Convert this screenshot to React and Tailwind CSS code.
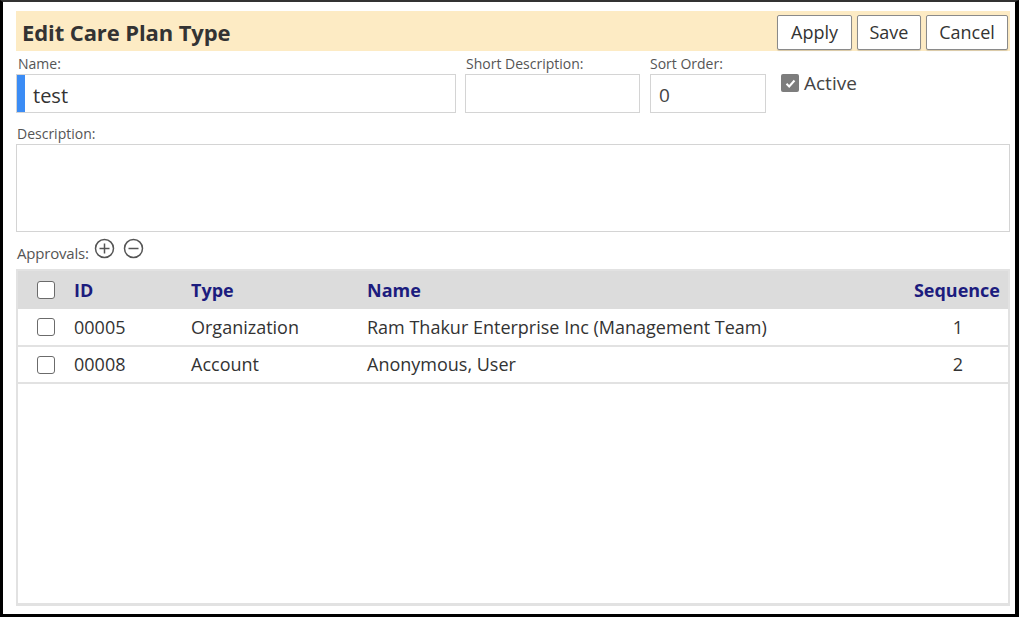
import React from "react";

const rows = [
  { id: "00005", type: "Organization", name: "Ram Thakur Enterprise Inc (Management Team)", seq: 1 },
  { id: "00008", type: "Account", name: "Anonymous, User", seq: 2 },
];

const buttons = [
  { label: "Apply", w: "w-[75px]" },
  { label: "Save", w: "w-[64px]" },
  { label: "Cancel", w: "w-[82px]" },
];

function Box() {
  return <span className="block h-[18px] w-[18px] rounded-[3px] border-[1.5px] border-[#6b6b6b] bg-white" />;
}

function CircleIcon({ plus }) {
  return (
    <svg width="21" height="21" viewBox="0 0 21 21" fill="none" stroke="#555" strokeWidth="1.5">
      <circle cx="10.5" cy="10.5" r="9" />
      <line x1="5.5" y1="10.5" x2="15.5" y2="10.5" />
      {plus && <line x1="10.5" y1="5.5" x2="10.5" y2="15.5" />}
    </svg>
  );
}

export default function App() {
  return (
    <div className="h-[617px] w-[1019px] overflow-hidden border-t-2 border-l-[3px] border-r-[4px] border-b-[3px] border-t-[#333] border-l-black border-r-black border-b-black bg-white pl-[13px] pr-[5px] pt-[9px] font-['Open_Sans',sans-serif] text-[#333]">
      {/* header band */}
      <div className="flex h-[40px] items-center justify-between bg-[#fdebc4] pl-[6px] pr-[2px] pt-[3px]">
        <h1 className="text-[22px] font-bold tracking-[-0.1px] text-[#333]">Edit Care Plan Type</h1>
        <div className="flex gap-[5px]">
          {buttons.map((b) => (
            <button
              key={b.label}
              className={`h-[35px] ${b.w} rounded-[2px] border border-[#8a8a8a] bg-white text-[18px] text-[#333] shadow-[0_1px_1px_rgba(0,0,0,0.15)]`}
            >
              {b.label}
            </button>
          ))}
        </div>
      </div>

      {/* fields */}
      <div className="mt-[3px] flex items-start">
        <div className="w-[440px]">
          <div className="pl-[2px] text-[14px] leading-[20px] text-[#555]">Name:</div>
          <div className="flex h-[39px] border border-[#d4d4d4]">
            <span className="w-[8px] bg-[#3b8cf5]" />
            <span className="flex items-center pl-[8px] pt-[4px] text-[20px] text-[#333]">test</span>
          </div>
        </div>
        <div className="ml-[9px] w-[175px]">
          <div className="pl-[1px] text-[14px] leading-[20px] text-[#555]">Short Description:</div>
          <div className="h-[39px] border border-[#d4d4d4]" />
        </div>
        <div className="ml-[10px] w-[116px]">
          <div className="text-[14px] leading-[20px] text-[#555]">Sort Order:</div>
          <div className="flex h-[39px] items-center border border-[#d4d4d4] pl-[8px] pt-[4px] text-[19px] text-[#444]">0</div>
        </div>
        <div className="ml-[15px] mt-[15px] flex items-center gap-[5px]">
          <span className="flex h-[18px] w-[18px] items-center justify-center rounded-[2px] bg-[#7d7d7d]">
            <svg width="13" height="13" viewBox="0 0 13 13" fill="none" stroke="white" strokeWidth="2">
              <path d="M2.5 6.8 L5.2 9.5 L10.5 3.5" />
            </svg>
          </span>
          <span className="text-[19px] text-[#444]">Active</span>
        </div>
      </div>

      {/* description */}
      <div className="mt-[11px]">
        <div className="pl-[1px] text-[14px] leading-[20px] text-[#555]">Description:</div>
        <div className="h-[88px] border border-[#d4d4d4]" />
      </div>

      {/* approvals */}
      <div className="mt-[6px] flex items-end gap-[5px]">
        <span className="pl-[1px] text-[15px] leading-[16px] tracking-[-0.2px] text-[#555]">Approvals:</span>
        <div className="mb-[2px] flex gap-[8px]">
          <CircleIcon plus />
          <CircleIcon />
        </div>
      </div>

      <div className="mt-[8px] h-[337px] border-2 border-b-[3px] border-[#e2e2e2]">
        <table className="w-full border-collapse text-[18px]">
          <thead>
            <tr className="h-[38px] bg-[#dcdcdc] text-left font-bold text-[#1c1c7e]">
              <th className="w-[56px] pl-[19px]"><Box /></th>
              <th className="w-[117px] font-bold">ID</th>
              <th className="w-[176px] font-bold">Type</th>
              <th className="font-bold">Name</th>
              <th className="pr-[8px] text-right font-bold">Sequence</th>
            </tr>
          </thead>
          <tbody>
            {rows.map((r) => (
              <tr key={r.id} className="h-[37px] border-b-2 border-[#e2e2e2] text-[#333]">
                <td className="pl-[19px]"><Box /></td>
                <td>{r.id}</td>
                <td>{r.type}</td>
                <td>{r.name}</td>
                <td className="pr-[45px] text-right">{r.seq}</td>
              </tr>
            ))}
          </tbody>
        </table>
      </div>
    </div>
  );
}
